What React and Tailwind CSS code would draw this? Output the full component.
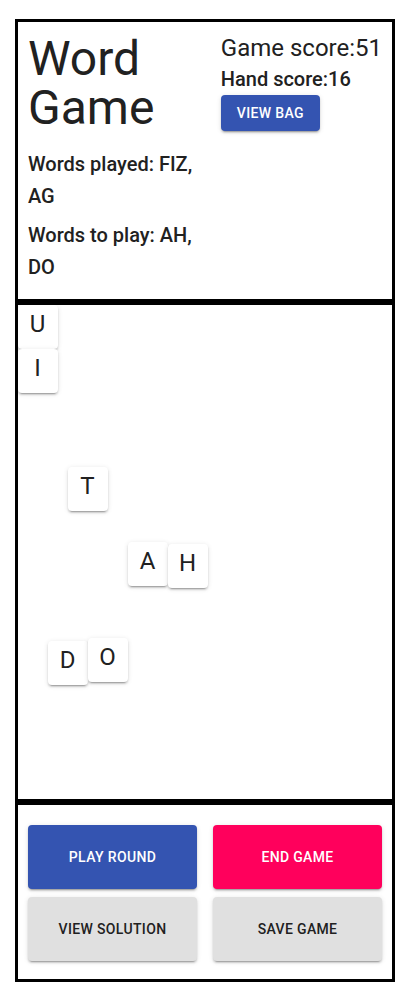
const tiles = [
  { letter: "U", x: 0, y: 0 },
  { letter: "I", x: 0, y: 44 },
  { letter: "T", x: 50, y: 162 },
  { letter: "A", x: 110, y: 237 },
  { letter: "H", x: 150, y: 239 },
  { letter: "D", x: 30, y: 336 },
  { letter: "O", x: 70, y: 333 },
];

const raised =
  "rounded shadow-[0_3px_1px_-2px_rgba(0,0,0,0.2),0_2px_2px_0_rgba(0,0,0,0.14),0_1px_5px_0_rgba(0,0,0,0.12)]";

const buttonBase = `${raised} text-sm font-medium uppercase tracking-wide`;

function ActionButton({ colors, children }) {
  return (
    <button type="button" className={`${buttonBase} h-16 ${colors}`}>
      {children}
    </button>
  );
}

function Tile({ letter, x, y }) {
  return (
    <div
      className={`${raised} absolute h-11 w-10 cursor-grab bg-white pr-px text-center text-2xl leading-[38px]`}
      style={{ left: x, top: y }}
    >
      {letter}
    </div>
  );
}

export default function App() {
  return (
    <main className="bg-white pt-[19px] pr-[25px] pb-[17px] pl-[15px] font-[Roboto,sans-serif] text-[#212121]">
      <header className="flex justify-between gap-4 border-3 border-black px-2.5 pt-2.5 pb-4">
        <div className="pt-0.5">
          <h1 className="mb-4 text-5xl leading-[49px]">Word Game</h1>
          <h2 className="mb-[7px] text-xl leading-8 font-medium">Words played: FIZ, AG</h2>
          <h2 className="text-xl leading-8 font-medium">Words to play: AH, DO</h2>
        </div>
        <div className="shrink-0">
          <p className="text-2xl leading-8">Game score:51</p>
          <p className="text-xl leading-[31px] font-medium">Hand score:16</p>
          <button type="button" className={`${buttonBase} h-9 bg-[#3454b1] px-4 text-white`}>
            View bag
          </button>
        </div>
      </header>

      <section aria-label="Board" className="relative h-[500px] overflow-hidden border-3 border-black">
        {tiles.map((tile) => (
          <Tile key={tile.letter} {...tile} />
        ))}
      </section>

      <footer className="grid grid-cols-2 gap-x-4 gap-y-2 border-3 border-black px-2.5 pt-5 pb-[18px]">
        <ActionButton colors="bg-[#3454b1] text-white">Play round</ActionButton>
        <ActionButton colors="bg-[#ff005c] text-white">End game</ActionButton>
        <ActionButton colors="bg-[#e0e0e0] text-[#212121]">View solution</ActionButton>
        <ActionButton colors="bg-[#e0e0e0] text-[#212121]">Save game</ActionButton>
      </footer>
    </main>
  );
}
